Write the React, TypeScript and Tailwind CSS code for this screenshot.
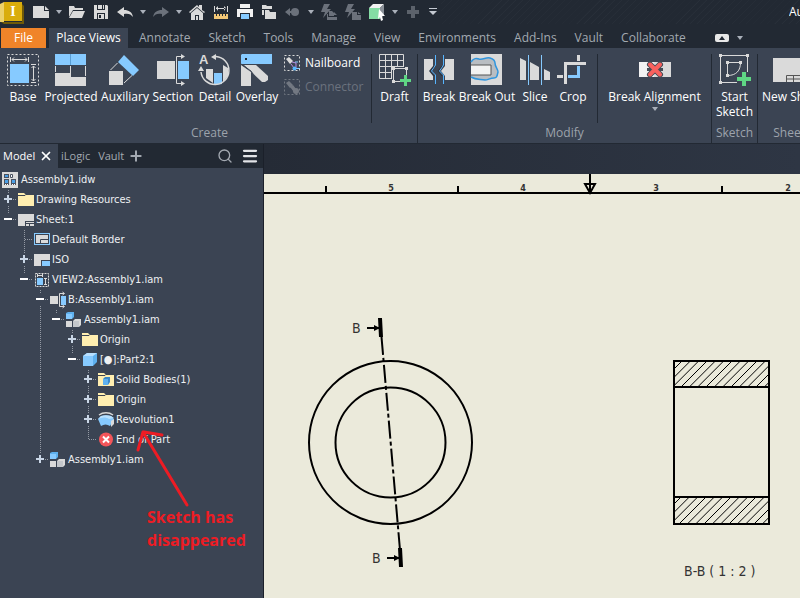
import { useState, type ReactNode } from "react";
import clsx from "clsx";
import { Menu, Plus, Search, X } from "lucide-react";

const BLUE = "#86caff";
const GRAY = "#dadada";
const GREEN = "#5fd684";
const DIM = "#6b717b";

/* ---------- quick access icons, 18x18 ---------- */

const Small = ({ children }: { children: ReactNode }) => (
  <svg width="18" height="18" viewBox="0 0 18 18" fill={GRAY} aria-hidden="true">
    {children}
  </svg>
);

const quickIcons = {
  new: (
    <Small>
      <path d="M1 3h11v5h5v7H1z" />
      <path d="M13 3l4 4h-4z" />
    </Small>
  ),
  open: (
    <Small>
      <path d="M1 3h5l1 2h8v2H5L1 14z" />
      <path d="M5 8h12l-3 7H1z" />
    </Small>
  ),
  save: (
    <Small>
      <path d="M2 2h3v5h8V2h2l1 1v13H2z" />
      <path d="M6 2h4v4H6zM11 2h1v4h-1z" />
      <path d="M5 10h8v6H5z" fill="#222933" />
      <path d="M6 11h6v5H6z" />
      <path d="M7 12h2v3H7z" fill="#222933" />
    </Small>
  ),
  undo: (
    <Small>
      <path d="M1 9l7-5v3c5 0 8 2 9 7-2-3-5-4-9-3v3z" />
    </Small>
  ),
  redo: (
    <Small>
      <path d="M17 9l-7-5v3c-5 0-8 2-9 7 2-3 5-4 9-3v3z" fill={DIM} />
    </Small>
  ),
  home: (
    <Small>
      <path d="M1 9l8-7 2 2V2h3v5l3 2-1 1-7-6-7 6z" />
      <path d="M3 10l6-5 6 5v7h-4v-5H7v5H3z" />
      <path d="M8 13h2v4H8z" />
    </Small>
  ),
  measure: (
    <Small>
      <path d="M2 3h1v6H2zM15 3h1v6h-1zM4 5h10v1H4zM4 5l2-2v5zM14 5l-2-2v5z" />
      <path d="M2 11h14v5H2z" fill="#f2c777" />
      <path d="M4 11h1v2H4zM7 11h1v2H7zM10 11h1v2h-1zM13 11h1v2h-1z" fill="#222933" />
    </Small>
  ),
  print: (
    <Small>
      <path d="M4 1h10v4H4zM1 6h16v8H1z" fill="#f2f2f2" />
      <path d="M4 10h10v7H4z" fill="#222933" />
      <path d="M5 11h8v5H5z" fill={BLUE} />
    </Small>
  ),
  team: (
    <Small>
      <path d="M2 2h4l1 1h5v3H2zM2 7h2v5H2z" />
      <path d="M5 7h4l1 2h6v7H5z" />
    </Small>
  ),
  back: (
    <Small>
      <path d="M1 9l5-4v3h3v2H6v3z" fill={DIM} />
      <circle cx="11" cy="9" r="4" fill={DIM} />
    </Small>
  ),
  updateAll: (
    <Small>
      <path d="M4 1h6L7 6h4l-8 9 2-6H1z" fill={DIM} />
      <path d="M9 8h3l2 2v3H9zM7 11h1v3h9v3H7zM14 9l3 3h-3z" fill={DIM} />
    </Small>
  ),
  update: (
    <Small>
      <path d="M4 1h6L7 6h4l-8 9 2-6H1z" fill={DIM} />
      <path d="M8 9h5v3h4v5H8zM14 9l3 2h-3z" fill={DIM} />
    </Small>
  ),
  cube: (
    <Small>
      <path d="M1 5l4-4h11l-4 4z" fill="#f2f2f2" />
      <path d="M12 5l4-4v11l-4 4z" fill="#8b9199" />
      <path d="M1 5h11v11H1z" fill="#84dca4" />
      <path d="M11 6l6 7h-3l1 4-2 1-1-4-2 2z" fill="#fff" />
    </Small>
  ),
  add: (
    <Small>
      <path d="M7 3h4v4h4v4h-4v4H7v-4H3V7h4z" fill="#5c626b" />
    </Small>
  ),
};

const Caret = ({ className }: { className?: string }) => (
  <svg width="6" height="4" viewBox="0 0 6 4" className={className} aria-hidden="true">
    <path d="M0 0h6L3 4z" fill="#aab0ba" />
  </svg>
);

const quickItems: { id: keyof typeof quickIcons; label: string; menu?: boolean }[] = [
  { id: "new", label: "New", menu: true },
  { id: "open", label: "Open" },
  { id: "save", label: "Save" },
  { id: "undo", label: "Undo", menu: true },
  { id: "redo", label: "Redo", menu: true },
  { id: "home", label: "Home" },
  { id: "measure", label: "Measure" },
  { id: "print", label: "Print" },
  { id: "team", label: "Projects" },
  { id: "back", label: "Return", menu: true },
  { id: "updateAll", label: "Update all" },
  { id: "update", label: "Update" },
  { id: "cube", label: "Select", menu: true },
  { id: "add", label: "Add" },
];

function QuickAccess() {
  return (
    <div className="flex h-6 items-center bg-[repeating-linear-gradient(135deg,#222933_0px,#222933_4px,#282f39_5px)]">
      <div className="flex shrink-0 items-center bg-[#222933]">
        <button aria-label="Application menu" className="w-[29px]">
          <svg width="24" height="24" viewBox="0 0 24 24" aria-hidden="true">
            <path d="M0 4l4-2v20H0z" fill="#ecd16a" />
            <path d="M22 4l2 2v18H4l-3-2h21z" fill="#6f5a08" />
            <path d="M4 2h18v19H4z" fill="#d9ad0c" />
            <text x="13" y="16" textAnchor="middle" fill="#fff" fontSize="14" fontWeight="700" fontFamily="'Liberation Serif', serif">
              I
            </text>
          </svg>
        </button>
        {quickItems.map((item) => (
          <div key={item.id} className="flex items-center">
            <button aria-label={item.label} className="flex h-6 w-6 items-center justify-center">
              {quickIcons[item.id]}
            </button>
            {item.menu && (
              <button aria-label={`${item.label} options`} className="flex h-6 w-3 items-center justify-center">
                <Caret />
              </button>
            )}
          </div>
        ))}
        <button aria-label="Customize" className="flex h-6 w-4 items-center justify-center">
          <svg width="8" height="8" viewBox="0 0 8 8" fill="#c5cad2" aria-hidden="true">
            <path d="M0 0h8v1H0zM0 3h8L4 7z" />
          </svg>
        </button>
      </div>
      <span className="ml-auto w-[11px] overflow-hidden text-xs text-white">Au</span>
    </div>
  );
}

const ribbonTabs = ["Annotate", "Sketch", "Tools", "Manage", "View", "Environments", "Add-Ins", "Vault", "Collaborate"];

function RibbonTabs() {
  return (
    <nav className="flex items-end pt-1 pl-px text-xs text-[#a3a9b1]">
      <button className="mr-[3px] h-5 w-[45px] bg-[#f08429] text-white">File</button>
      <button className="mr-0.5 h-5 w-[79px] bg-[#3b4453] text-white">Place Views</button>
      {ribbonTabs.map((tab) => (
        <button key={tab} className="h-5 px-[9px] whitespace-nowrap">
          {tab}
        </button>
      ))}
      <button aria-label="Minimize ribbon" className="ml-5 flex h-5 items-center gap-2">
        <svg width="14" height="8" viewBox="0 0 14 8" aria-hidden="true">
          <rect width="14" height="8" rx="2" fill="#e8e8e8" />
          <path d="M4 6l3-4 3 4z" fill="#222933" />
        </svg>
        <Caret />
      </button>
    </nav>
  );
}

/* ---------- ribbon icons, 32x32 ---------- */

const Large = ({ children }: { children: ReactNode }) => (
  <svg width="32" height="32" viewBox="0 0 32 32" fill={GRAY} className="overflow-visible" aria-hidden="true">
    {children}
  </svg>
);

const BaseIcon = () => (
  <Large>
    <rect x="0.5" y="0.5" width="31" height="31" fill="none" stroke={GRAY} strokeDasharray="2 2" />
    <rect x="3" y="10" width="19" height="19" fill={BLUE} />
    <path
      d="M3.5 3v5M21.5 3v5M5 5.5h15M7 3.5l-2 2 2 2M18 3.5l2 2-2 2M24 10.5h5M24 28.5h5M26.5 12v15M24.5 14l2-2 2 2M24.5 25l2 2 2-2"
      fill="none"
      stroke={GRAY}
    />
  </Large>
);

const ProjectedIcon = () => (
  <Large>
    <path d="M0 0h31v11H0z" fill={BLUE} />
    <path d="M15.5 0v11" stroke="#5a9fd6" />
    <path d="M0 19h16v4h15v9H0z" />
    <path d="M.5 12v6M15.5 12v10M30.5 12v10" stroke={GRAY} />
  </Large>
);

const AuxiliaryIcon = () => (
  <Large>
    <path d="M0 17h14v14H0z" />
    <path d="M15 1l15 15-6 6L9 8z" fill={BLUE} />
    <path d="M1.5 16l7-7M15 29l8-7.5" stroke={GRAY} />
  </Large>
);

const SectionIcon = () => (
  <Large>
    <path d="M0 7h18v18H0z" />
    <path d="M21 7h11v18H21z" fill={BLUE} />
    <path d="M25 2.5h-5.5v27H25" fill="none" stroke={GRAY} />
    <path d="M24 0l4 2.5-4 2.5zM24 27l4 2.5-4 2.500z" />
  </Large>
);

const DetailIcon = () => (
  <Large>
    <text x="0" y="10" fontSize="13" fontWeight="700" fontFamily="'Liberation Sans', sans-serif">
      A
    </text>
    <path d="M7 15h7v14l-7-5zM24 11l5 3v8l-5 6z" />
    <path d="M15 19h8v11l-8 1z" fill={BLUE} />
    <path d="M2 18a14 14 0 1 0 15-15.500" fill="none" stroke={GRAY} strokeWidth="1.5" />
    <path d="M12 3l5-3v6zM-1 17l3-5 3 5z" />
  </Large>
);

const OverlayIcon = () => (
  <Large>
    <path d="M1 0h30v10H0V1z" fill={BLUE} />
    <rect x="4" y="4" width="2" height="2" fill="#222933" />
    <path d="M0 11l10 7v14H0z" />
    <path d="M3 11h12l12 11v4l-3 2h-3z" />
    <path d="M0 10l10 7 2 3" fill="none" stroke="#3b4453" />
  </Large>
);

const DraftIcon = () => (
  <Large>
    <path d="M.5.5h24V13M.5.5v24H13M.5 6.5h24M.5 12.5h24M.5 18.5H12M6.5.5v24M12.5.5v24M18.5.5V12" fill="none" stroke={GRAY} />
    <path d="M13 13h16v16H13z" fill="#3b4453" />
    <rect x="14.5" y="14.5" width="13" height="13" fill="none" stroke={GRAY} />
    <path d="M13 13h3v3h-3zM26 13h3v3h-3zM13 26h3v3h-3z" />
    <path d="M25 21h3v4h4v3h-4v4h-3v-4h-4v-3h4z" fill={GREEN} />
  </Large>
);

const BreakIcon = () => (
  <Large>
    <path d="M1 5h9v7l-4 5 4 5v4H1zM22 5h9v21h-9v-4l-4-5 4-5z" />
    <path d="M12.5 1v10l-4 6 4 4v9M20.5 1v10l-4 6 4 4v9" fill="none" stroke="#57b5ff" />
    <path d="M11 12l-4 5 4 5M19 12l-4 5 4 5" fill="none" stroke="#222933" strokeWidth="0.7" />
  </Large>
);

const BreakOutIcon = () => (
  <Large>
    <path d="M0 0h31v31H0z" />
    <path
      d="M0 8c3-4 5-4 8-3 4 1 7-2 11-1 3 1 5 2 5 5 0 4 3 6 3 9-1 4-1 6-4 6-4 0-6 2-9 2-5-1-9 0-14-3"
      fill="#b9bdc2"
      stroke="#2f95de"
      strokeWidth="1.5"
    />
    <path d="M0 11h20v10H0" fill="#f2f2f2" stroke="#555" />
  </Large>
);

const SliceIcon = () => (
  <Large>
    <path d="M1 4l6 3v19H1zM11 8l9 5v13h-9zM25 15l6 3v8h-6z" />
    <path d="M9.5 1v30M22.5 1v30" stroke={BLUE} />
  </Large>
);

const CropIcon = () => (
  <Large>
    <path d="M7 8h22v3H10v19H7zM20 1h3v6h-3zM0 21h6v3H0z" />
    <path d="M20 12h3v12H11v-3h9z" fill={BLUE} />
  </Large>
);

const BreakAlignmentIcon = () => (
  <Large>
    <path d="M0 8h15v15H0z" fill="#f2f2f2" />
    <path d="M15 8h17v15H15z" />
    <path d="M8 15.5h4M20 15.5h4" stroke="#444b56" strokeWidth="3" />
    <path d="M11 10.5l10 10M21 10.5l-10 10" stroke="#444b56" strokeWidth="6" strokeLinecap="round" />
    <path d="M11 10.5l10 10M21 10.5l-10 10" stroke="#f8615e" strokeWidth="4" strokeLinecap="round" />
  </Large>
);

const StartSketchIcon = () => (
  <Large>
    <path d="M1.5 1.5h27v27h-27z" fill="none" stroke={GRAY} />
    <path d="M0 0h3v3H0zM27 0h3v3h-3zM0 27h3v3H0zM7 7h3v3H7zM20 7h3v3h-3zM7 20h3v3H7z" />
    <path d="M8.5 8.5h13c0 8-4 13-13 13z" fill="none" stroke={GRAY} />
    <path d="M18 24h6v-6h7v14H18z" fill="#3b4453" />
    <path d="M23 18h4v5h5v4h-5v5h-4v-5h-5v-4h5z" fill={GREEN} />
  </Large>
);

const NewSheetIcon = () => (
  <Large>
    <path d="M-3 4h38v24H-3z" />
    <path d="M10.5 28v-6.5H35M10.500 25H35M17.500 22v6" fill="none" stroke="#555" />
  </Large>
);

type ToolProps = { icon: ReactNode; label: string; className?: string; menu?: boolean };

function Tool({ icon, label, className = "w-[42px]", menu }: ToolProps) {
  return (
    <button className={clsx("flex shrink-0 flex-col items-center gap-[3px] text-xs leading-[15px] text-white", className)}>
      {icon}
      <span>{label}</span>
      {menu && <Caret />}
    </button>
  );
}

function Group({ title, className, children }: { title: string; className?: string; children: ReactNode }) {
  return (
    <section className={clsx("flex shrink-0 flex-col border-r border-[#222933]", className)}>
      <div className="flex h-[75px] whitespace-nowrap">{children}</div>
      <h2 className="text-center text-xs leading-5 text-[#9da3ac]">{title}</h2>
    </section>
  );
}

const SmallDashIcon = ({ dim }: { dim?: boolean }) => (
  <svg width="16" height="16" viewBox="0 0 16 16" opacity={dim ? 0.35 : 1} className="overflow-visible" aria-hidden="true">
    <rect x="0.5" y="0.5" width="15" height="15" fill="none" stroke={GRAY} strokeDasharray="2 2" />
    <path d="M2 4l3-2 4 4-3 3z" fill={GRAY} />
    {dim ? (
      <>
        <path d="M6 8l3-2 3 4-2 3z" fill={GRAY} />
        <circle cx="12" cy="12" r="3" fill={GRAY} />
      </>
    ) : (
      <>
        <path d="M8 7l4 1v5M7 9l3 4" stroke="#b48ae0" fill="none" />
        <path d="M11 7h3M11 13.5h5" stroke={BLUE} fill="none" />
        <circle cx="10.500" cy="13.500" r="2" fill="#57b5ff" />
      </>
    )}
  </svg>
);

function Ribbon() {
  return (
    <div className="flex h-[95px] overflow-hidden bg-[#3b4453] pt-1.5">
      <Group title="Create" className="pl-0.5">
        <Tool icon={<BaseIcon />} label="Base" />
        <Tool icon={<ProjectedIcon />} label="Projected" className="w-[54px]" />
        <Tool icon={<AuxiliaryIcon />} label="Auxiliary" className="w-[54px]" />
        <Tool icon={<SectionIcon />} label="Section" />
        <Tool icon={<DetailIcon />} label="Detail" />
        <Tool icon={<OverlayIcon />} label="Overlay" />
        <div className="flex w-[94px] flex-col gap-2 border-r border-[#222933] pt-px pl-1.5 text-xs leading-4">
          <button className="flex items-center gap-[5px] text-white">
            <SmallDashIcon />
            Nailboard
          </button>
          <button disabled className="flex items-center gap-[5px] text-[#6b727e]">
            <SmallDashIcon dim />
            Connector
          </button>
        </div>
        <Tool icon={<DraftIcon />} label="Draft" className="w-[45px]" />
      </Group>
      <Group title="Modify">
        <Tool icon={<BreakIcon />} label="Break" />
        <Tool icon={<BreakOutIcon />} label="Break Out" className="w-[54px]" />
        <Tool icon={<SliceIcon />} label="Slice" />
        <div className="w-[42px] border-r border-[#222933]">
          <Tool icon={<CropIcon />} label="Crop" className="w-[34px]" />
        </div>
        <Tool icon={<BreakAlignmentIcon />} label="Break Alignment" className="w-[113px]" menu />
      </Group>
      <Group title="Sketch">
        <Tool icon={<StartSketchIcon />} label="Start Sketch" className="w-[45px] whitespace-normal" />
      </Group>
      <Group title="Sheets">
        <Tool icon={<NewSheetIcon />} label="New Sheet" className="w-[68px]" />
      </Group>
    </div>
  );
}

/* ---------- browser tree, 16x16 icons ---------- */

const TreeSvg = ({ children }: { children: ReactNode }) => (
  <svg width="16" height="16" viewBox="0 0 16 16" fill={GRAY} className="shrink-0 overflow-visible" aria-hidden="true">
    {children}
  </svg>
);

const Folder = ({ solid }: { solid?: boolean }) => (
  <TreeSvg>
    <path d="M0 1h6l2 2h8v11H0z" fill="#ffeeb0" />
    <path d="M0 3.5h7l1-1" stroke="#3b4453" fill="none" />
    {solid && (
      <>
        <path d="M5 7l2-2h5v5l-2 3H5z" fill="#3b88c8" />
        <path d="M5 7h5v6H5z" fill="#5eb0ee" />
      </>
    )}
  </TreeSvg>
);

const treeIcons = {
  document: (
    <TreeSvg>
      <path d="M0 0h16v16H0z" />
      <path d="M2 2h5v4H2zM2 7h5v6H2zM9 7h5v6H9z" fill="#4a5260" />
      <path d="M8.5 2.5h2v3h-2z" fill="#fff" stroke="#4a5260" />
      <path d="M3 3h3v2H3zM3 8h3v3H3zM10 8h3v3h-3z" fill="#4b9fe6" />
      <path d="M3 12h1v1H3zM5 12h1v1H5zM10 12h1v1h-1zM12 12h1v1h-1z" fill="#fff" />
    </TreeSvg>
  ),
  folder: <Folder />,
  bodies: <Folder solid />,
  sheet: (
    <TreeSvg>
      <path d="M0 2h16v7H7v5H0z" />
      <path d="M8 10h8v1H8zM8 12h3v2H8zM12 12h4v2h-4z" />
    </TreeSvg>
  ),
  border: (
    <TreeSvg>
      <rect x="0.5" y="1.5" width="15" height="11" fill="#3b4453" stroke={BLUE} />
      <path d="M2 3h12v8H2z" />
      <path d="M6.5 11V7.5H14" fill="none" stroke="#3b4453" />
    </TreeSvg>
  ),
  standard: (
    <TreeSvg>
      <path d="M0 2h16v6H7v6H0z" />
      <path d="M8 9h8v5H8z" fill={BLUE} />
    </TreeSvg>
  ),
  view: (
    <TreeSvg>
      <rect x="1.5" y="1.5" width="13" height="13" fill="none" stroke={GRAY} strokeDasharray="2 1" />
      <path d="M3 6h6v7H3z" fill={BLUE} />
      <path d="M3.5 2v3M8.5 2v3M4 3.5h4M10 6.5h3M10 12.5h3M11.5 7v5" stroke={GRAY} />
    </TreeSvg>
  ),
  section: (
    <TreeSvg>
      <path d="M0 4h8v8H0z" />
      <path d="M11 4h5v9h-5z" fill={BLUE} />
      <path d="M14 1.5H9.5v13H14M12.5 0l2 1.5-2 1.5M12.5 13l2 1.5-2 1.500" fill="none" stroke={GRAY} />
    </TreeSvg>
  ),
  assembly: (
    <TreeSvg>
      <path d="M0 1l2-1h6v5l-2 2H0z" fill="#5eb0ee" />
      <path d="M0 2h6v5H0z" fill={BLUE} />
      <path d="M0 9h6v6H0zM7 9l2-2h6v6l-2 2H7z" />
      <path d="M7 9h6v6H7z" fill="#c4c7cb" />
    </TreeSvg>
  ),
  part: (
    <TreeSvg>
      <path d="M1 4l4-3h10v9l-4 4H1z" fill="#5eb0ee" />
      <path d="M1 4l4-3h10l-4 3z" fill="#b8e0ff" />
      <path d="M1 4h10v10H1z" fill={BLUE} />
    </TreeSvg>
  ),
  revolution: (
    <TreeSvg>
      <path d="M1 3c4-3 10-3 14 0" fill="none" stroke={GRAY} strokeWidth="1.5" />
      <path d="M0 7l3-3c4-1 7-1 10 0l3 3-4 7c-3-2-6-2-9 0z" fill={BLUE} />
      <path d="M0 7c4-2 8-2 11 0l5-1-3-2C9 3 6 3 3 4z" fill="#b8e0ff" />
      <path d="M13 9l3-2v5l-3 3z" />
    </TreeSvg>
  ),
  end: (
    <TreeSvg>
      <circle cx="8" cy="7.5" r="7" fill="#f4555a" />
      <path d="M5 4.5l6 6M11 4.5l-6 6" stroke="#fff" strokeWidth="2" />
    </TreeSvg>
  ),
};

type TreeNode = { label: string; icon: keyof typeof treeIcons; closed?: boolean; children?: TreeNode[] };

const tree: TreeNode[] = [
  { label: "Drawing Resources", icon: "folder", closed: true },
  {
    label: "Sheet:1",
    icon: "sheet",
    children: [
      { label: "Default Border", icon: "border" },
      { label: "ISO", icon: "standard", closed: true },
      {
        label: "VIEW2:Assembly1.iam",
        icon: "view",
        children: [
          {
            label: "B:Assembly1.iam",
            icon: "section",
            children: [
              {
                label: "Assembly1.iam",
                icon: "assembly",
                children: [
                  { label: "Origin", icon: "folder", closed: true },
                  {
                    label: "[●]:Part2:1",
                    icon: "part",
                    children: [
                      { label: "Solid Bodies(1)", icon: "bodies", closed: true },
                      { label: "Origin", icon: "folder", closed: true },
                      { label: "Revolution1", icon: "revolution", closed: true },
                      { label: "End of Part", icon: "end" },
                    ],
                  },
                ],
              },
            ],
          },
          { label: "Assembly1.iam", icon: "assembly", closed: true },
        ],
      },
    ],
  },
];

// 16x20 cell with the dotted connectors and the plus or minus over them
function Joint({ last, sign }: { last: boolean; sign?: "+" | "-" }) {
  return (
    <svg width="16" height="20" viewBox="0 0 16 20" fill="none" aria-hidden="true">
      <path d={last ? "M8.5 0v10" : "M8.5 0v20"} stroke="#949aa4" strokeDasharray="1 1" />
      <path d="M9 9.5h7" stroke="#949aa4" strokeDasharray="1 1" />
      {sign && <path d="M3 4h10v11H3z" fill="#3b4453" />}
      {sign === "+" && <path d="M4 9h8M8 5v8" stroke="#c9d6e6" strokeWidth="2" />}
      {sign === "-" && <path d="M4 9h8" stroke="#fff" strokeWidth="2" />}
    </svg>
  );
}

function TreeItem({ node, guides, last }: { node: TreeNode; guides: boolean[]; last: boolean }) {
  const [open, setOpen] = useState(!node.closed);
  const expandable = node.closed || !!node.children;

  return (
    <li>
      <div className="flex h-5 items-center">
        {guides.map((line, i) => (
          <svg key={i} width="16" height="20" className="shrink-0" aria-hidden="true">
            {line && <path d="M8.5 0v20" stroke="#949aa4" strokeDasharray="1 1" />}
          </svg>
        ))}
        {expandable ? (
          <button aria-label={`Toggle ${node.label}`} aria-expanded={open} onClick={() => setOpen(!open)}>
            <Joint last={last} sign={open ? "-" : "+"} />
          </button>
        ) : (
          <Joint last={last} />
        )}
        <span className="flex items-center gap-0.5 pl-0.5 whitespace-nowrap">
          {treeIcons[node.icon]}
          {node.label}
        </span>
      </div>
      {open && node.children && <TreeList nodes={node.children} guides={[...guides, !last]} />}
    </li>
  );
}

function TreeList({ nodes, guides }: { nodes: TreeNode[]; guides: boolean[] }) {
  return (
    <ul>
      {nodes.map((node, i) => (
        <TreeItem key={i} node={node} guides={guides} last={i === nodes.length - 1} />
      ))}
    </ul>
  );
}

function Browser() {
  return (
    <aside className="relative w-[264px] shrink-0 border-r border-[#1b202a] bg-[#3b4453]">
      <div className="flex h-6 items-center bg-[#222933] text-[11px] text-[#a3a9b1]">
        <button className="flex h-6 w-[58px] items-center justify-between bg-[#3b4453] pr-[5px] pl-[3px] text-white">
          Model
          <X size={14} strokeWidth={3} />
        </button>
        <button className="ml-[3px]">iLogic</button>
        <button className="ml-2">Vault</button>
        <button aria-label="Add panel" className="ml-1">
          <Plus size={16} strokeWidth={3} />
        </button>
        <button aria-label="Search" className="ml-auto">
          <Search size={16} />
        </button>
        <button aria-label="Panel menu" className="mr-1 ml-2 text-[#e2e4e7]">
          <Menu size={18} strokeWidth={3} />
        </button>
      </div>
      <div className="pt-0.5 font-['DejaVu_Sans_Condensed','DejaVu_Sans',sans-serif] text-[11px] text-[#eef0f2]">
        <div className="flex h-5 items-center gap-[3px] pl-0.5">
          {treeIcons.document}
          Assembly1.idw
        </div>
        <TreeList nodes={tree} guides={[]} />
      </div>
      <svg
        width="60"
        height="90"
        className="pointer-events-none absolute top-[280px] left-[130px]"
        fill="none"
        stroke="#ed1c24"
        strokeWidth="3"
        strokeLinecap="round"
        aria-hidden="true"
      >
        <path d="M57 81L13 8M8 26l5-18M14 8l18 3" />
      </svg>
      <p className="absolute top-[362px] left-[147px] font-['Open_Sans',sans-serif] text-base leading-[23px] font-bold text-[#ed1c24]">
        Sketch has
        <br />
        disappeared
      </p>
    </aside>
  );
}

/* ---------- drawing sheet ---------- */

const hatch = (x: number, top: number) =>
  Array.from({ length: 14 }, (_, i) => {
    const start = x + (i * 25) / 3;
    return <path key={i} d={`M${start} ${top}l-28 28`} stroke="#000" />;
  });

function Sheet() {
  return (
    <svg className="h-full min-h-[424px] w-full bg-[#ebeadb]" fill="none" stroke="#000" strokeWidth="2" role="img" aria-label="Drawing sheet">
      <defs>
        <clipPath id="upper">
          <path d="M410 187h95v26h-95z" />
        </clipPath>
        <clipPath id="lower">
          <path d="M410 323h95v27h-95z" />
        </clipPath>
      </defs>
      <line x1="0" y1="19" x2="100%" y2="19" />
      <path d="M62 12v6M194 12v6M458 12v6M326 0v18M321 10h10l-5 9z" />
      <g
        fill="#333"
        stroke="none"
        fontFamily="'DejaVu Sans Condensed', 'DejaVu Sans', sans-serif"
        fontSize="9"
        fontWeight="700"
        textAnchor="middle"
      >
        <text x="127" y="17">5</text>
        <text x="259" y="17">4</text>
        <text x="392" y="17">3</text>
        <text x="524" y="17">2</text>
      </g>
      <circle cx="126.5" cy="268.5" r="81.5" />
      <circle cx="126.5" cy="268.5" r="55" />
      <path d="M117.5 163L136 376" strokeDasharray="18 3 4 3" />
      <path d="M116 144l1 19M136 374l1 19" strokeWidth="4" />
      <path d="M103 154h12M123 384h12" />
      <path d="M110 151l6 3-6 3zM130 381l6 3-6 3z" fill="#000" stroke="none" />
      <g strokeWidth="1">
        <g clipPath="url(#upper)">{hatch(418, 187)}</g>
        <g clipPath="url(#lower)">{hatch(417, 323)}</g>
      </g>
      <path d="M410 187h95v163h-95zM410 213h95M410 323h95" />
      <g fill="#333" stroke="none" fontFamily="'DejaVu Sans Condensed', 'DejaVu Sans', sans-serif" fontSize="14">
        <text x="88" y="159">B</text>
        <text x="108" y="389">B</text>
        <text x="420" y="402">B-B ( 1 : 2 )</text>
      </g>
    </svg>
  );
}

export default function App() {
  return (
    <div className="flex min-h-screen flex-col overflow-hidden bg-[#222933] font-['Open_Sans',sans-serif]">
      <header>
        <QuickAccess />
        <RibbonTabs />
        <Ribbon />
      </header>
      <div className="flex flex-1 border-t border-[#222933]">
        <Browser />
        <main className="flex min-w-0 flex-1 flex-col">
          <div className="h-[30px] shrink-0 bg-linear-to-r from-[#252b36] to-[#2e3644]" />
          <div className="flex-1">
            <Sheet />
          </div>
        </main>
      </div>
    </div>
  );
}
